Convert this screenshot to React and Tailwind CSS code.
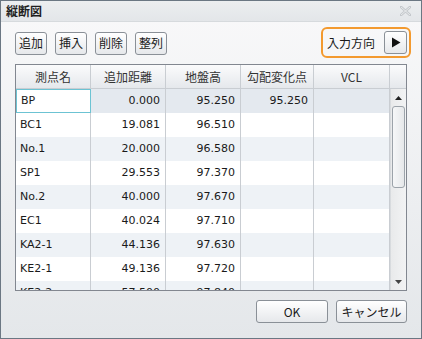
import React from "react";

const rows = [
  ["BP", "0.000", "95.250", "95.250"],
  ["BC1", "19.081", "96.510", ""],
  ["No.1", "20.000", "96.580", ""],
  ["SP1", "29.553", "97.370", ""],
  ["No.2", "40.000", "97.670", ""],
  ["EC1", "40.024", "97.710", ""],
  ["KA2-1", "44.136", "97.630", ""],
  ["KE2-1", "49.136", "97.720", ""],
  ["KE2-2", "57.500", "97.840", ""],
];

const jp = "font-['Noto_Sans_CJK_JP','Noto_Sans',sans-serif]";
const lat = "font-['DejaVu_Sans','Noto_Sans_CJK_JP',sans-serif]";

function Btn({ children, className = "" }) {
  return (
    <div
      className={`flex items-center justify-center h-[23px] border border-[#8a9097] rounded-[3px] bg-gradient-to-b from-[#ffffff] to-[#e6e8eb] text-[12px] text-[#1a1a1a] ${jp} ${className}`}
    >
      {children}
    </div>
  );
}

export default function App() {
  const cols = [75, 75, 75, 73, 76];
  return (
    <div className="w-[422px] h-[339px] border border-[#6b7783] flex flex-col bg-gradient-to-b from-[#f9f9fa] to-[#e4e7ea] overflow-hidden">
      {/* title bar */}
      <div className="h-[21px] shrink-0 flex items-center justify-between bg-gradient-to-b from-[#eceef0] to-[#e3e6e9] border-b border-[#d6dadd] pl-[5px] pr-[10px]">
        <span className={`text-[12px] font-bold text-[#1e1e1e] ${jp}`}>縦断図</span>
        <svg width="11" height="10" viewBox="0 0 11 10">
          <path d="M1 1 L10 9 M10 1 L1 9" stroke="#c4c8cc" strokeWidth="2.6" strokeLinecap="square" />
          <path d="M1 1 L10 9 M10 1 L1 9" stroke="#f0f2f3" strokeWidth="0.8" />
        </svg>
      </div>

      <div className="flex flex-col pl-[14px] pt-[5px]">
        {/* toolbar */}
        <div className="w-[396px] h-[31px] flex items-center justify-between">
          <div className="flex items-center gap-[8px] pt-[1px]">
            <Btn className="w-[32px]">追加</Btn>
            <Btn className="w-[32px]">挿入</Btn>
            <Btn className="w-[32px]">削除</Btn>
            <Btn className="w-[32px]">整列</Btn>
          </div>
          <div className="h-[31px] w-[90px] border-2 border-[#f39a2f] rounded-[6px] flex items-center justify-between pl-[4px] pr-[2px]">
            <span className={`text-[12px] text-[#1a1a1a] ${jp}`}>入力方向</span>
            <Btn className="w-[23px]">
              <svg width="10" height="11" viewBox="0 0 10 11">
                <path d="M1 0.5 L9.5 5.5 L1 10.5 Z" fill="#111" />
              </svg>
            </Btn>
          </div>
        </div>

        {/* table */}
        <div className="mt-[6px] w-[392px] h-[227px] border border-[#828790] bg-white flex flex-col overflow-hidden">
          {/* header */}
          <div className="h-[24px] shrink-0 flex bg-gradient-to-b from-[#fbfbfc] to-[#e5e8ec] border-b border-[#c9cdd2]">
            {[
              "測点名",
              "追加距離",
              "地盤高",
              "勾配変化点",
              "VCL",
            ].map((h, i) => (
              <div
                key={h}
                style={{ width: cols[i] }}
                className={`shrink-0 flex items-center justify-center border-r border-[#c9cdd2] text-[12px] text-[#333] ${jp}`}
              >
                {h}
              </div>
            ))}
            <div className="flex-1" />
          </div>
          <div className="flex flex-1 min-h-0">
            <div className="flex flex-col w-[374px] overflow-hidden">
              {rows.map((r, ri) => {
                const bg =
                  ri === 0 ? "bg-[#e4e9ef]" : ri % 2 === 0 ? "bg-[#eef2f6]" : "bg-white";
                return (
                  <div key={ri} className={`h-[24px] shrink-0 flex ${bg}`}>
                    {[r[0], r[1], r[2], r[3], ""].map((c, ci) => (
                      <div
                        key={ci}
                        style={{ width: cols[ci] }}
                        className={`shrink-0 flex items-center text-[11px] text-[#1a1a1a] ${lat} ${
                          ci === 0 ? "justify-start pl-[4px]" : "justify-end pr-[5px]"
                        } ${
                          ri === 0 && ci === 0
                            ? "bg-white border border-[#6cc3d3]"
                            : "border-r border-[#c9cdd2]"
                        }`}
                      >
                        {c}
                      </div>
                    ))}
                  </div>
                );
              })}
            </div>
            {/* scrollbar */}
            <div className="w-[16px] border-l border-[#d8dbde] bg-gradient-to-r from-[#e9eaeb] to-[#f2f3f4] flex flex-col items-center">
              <div className="h-[17px] w-full flex items-center justify-center">
                <svg width="7" height="4" viewBox="0 0 7 4">
                  <path d="M0 4 L3.5 0 L7 4 Z" fill="#222" />
                </svg>
              </div>
              <div className="w-[13px] h-[82px] rounded-[3px] border border-[#9ca3aa] bg-gradient-to-r from-[#f6f7f8] to-[#e6e8ea]" />
              <div className="flex-1" />
              <div className="h-[17px] w-full flex items-center justify-center">
                <svg width="7" height="4" viewBox="0 0 7 4">
                  <path d="M0 0 L7 0 L3.5 4 Z" fill="#444" />
                </svg>
              </div>
            </div>
          </div>
        </div>

        {/* bottom buttons */}
        <div className="mt-[9px] w-[392px] flex justify-end gap-[8px]">
          <Btn className="w-[72px]">OK</Btn>
          <Btn className="w-[71px]">キャンセル</Btn>
        </div>
      </div>
    </div>
  );
}
